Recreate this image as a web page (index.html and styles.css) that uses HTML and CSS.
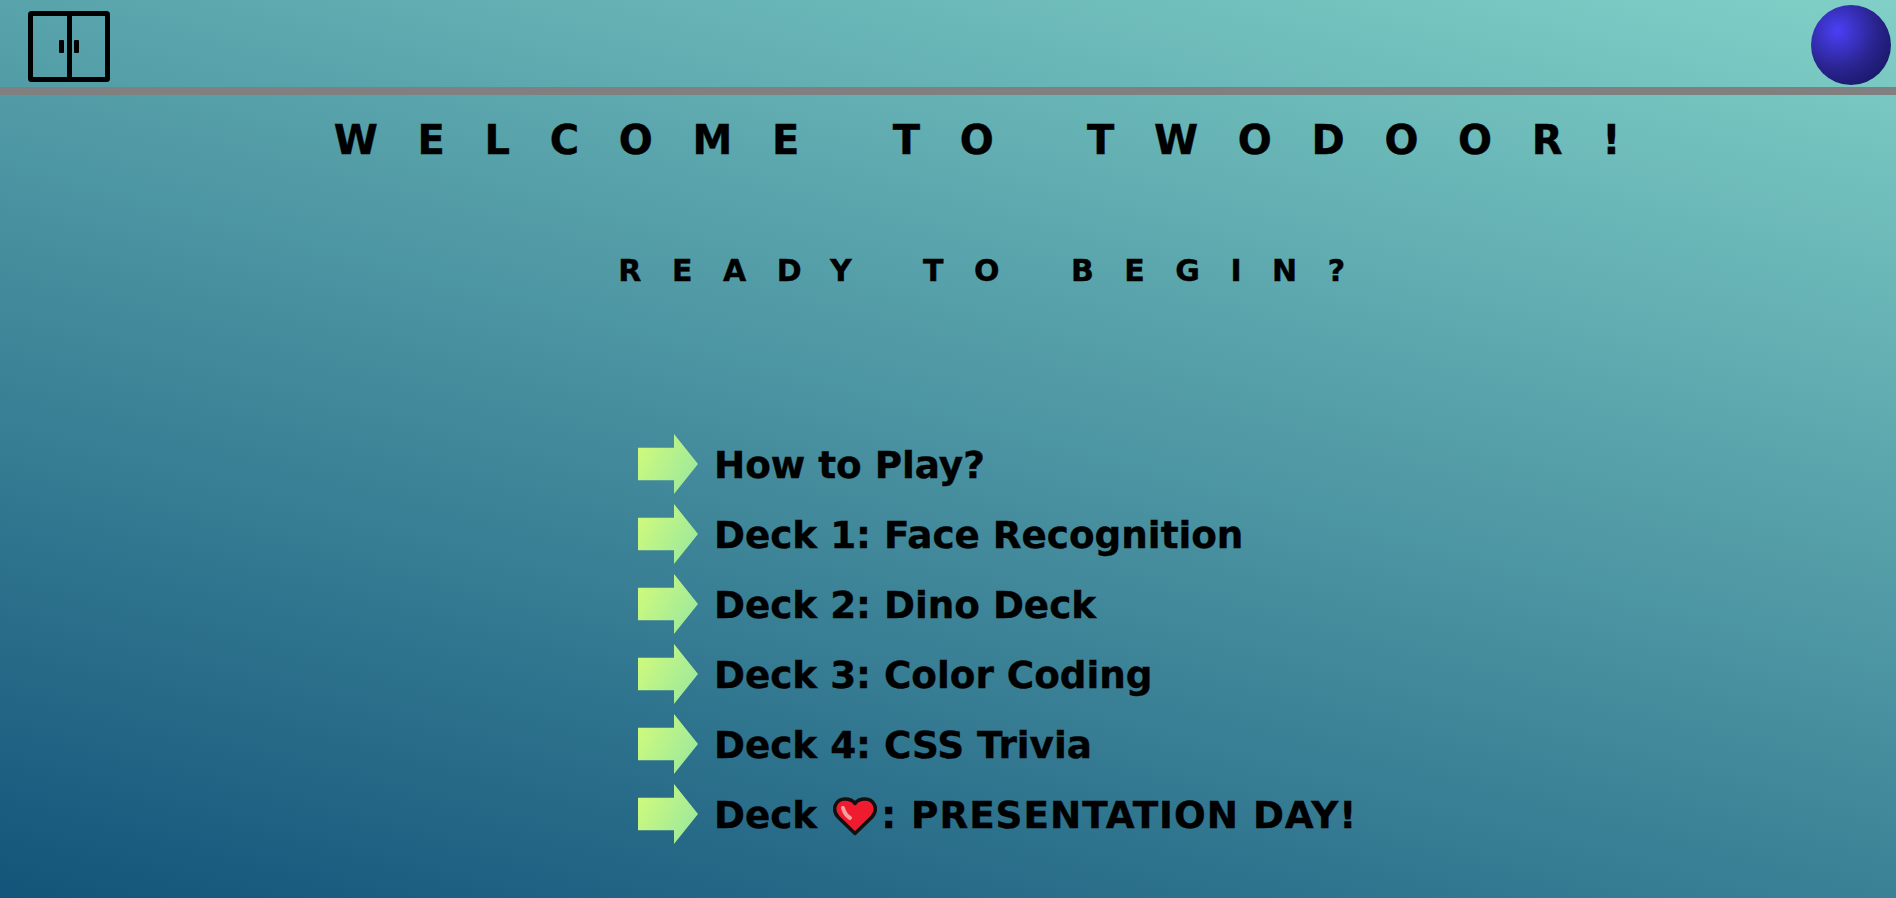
FILE: index.html
```html
<!DOCTYPE html>
<html lang="en">
<head>
    <meta charset="UTF-8">
    <title>TwoDoor</title>
    <link rel="stylesheet" href="styles.css">
</head>
<body>
    <header class="topbar">
        <svg class="logo" viewBox="0 0 82 71" width="82" height="71">
            <rect x="2.5" y="2.5" width="77" height="66" rx="1" fill="none" stroke="#000" stroke-width="5"/>
            <rect x="39" y="2" width="5" height="67" fill="#000"/>
            <rect x="31" y="29" width="5" height="13" rx="1" fill="#000"/>
            <rect x="46" y="29" width="5" height="13" rx="1" fill="#000"/>
        </svg>
        <div class="ball"></div>
    </header>

    <h1 class="welcome">WELCOME TO TWODOOR!</h1>
    <h2 class="ready">READY TO BEGIN?</h2>

    <ul class="decks">
        <li><span class="arrow"></span><span>How to Play?</span></li>
        <li><span class="arrow"></span><span>Deck 1: Face Recognition</span></li>
        <li><span class="arrow"></span><span>Deck 2: Dino Deck</span></li>
        <li><span class="arrow"></span><span>Deck 3: Color Coding</span></li>
        <li><span class="arrow"></span><span>Deck 4: CSS Trivia</span></li>
        <li><span class="arrow"></span><span>Deck</span>
            <svg class="heart" viewBox="0 0 44 40" width="44" height="40">
                <path d="M22 37.5 L5 21 C-2 13 3 3 12 3 C17 3 20 4.5 22 7.5 C24 4.5 27 3 32 3 C41 3 46 13 39 21 Z" fill="#ee1c2e" stroke="#111" stroke-width="3.5" stroke-linejoin="round"/>
                <path d="M10 12 C11 16 14 20 17 22" fill="none" stroke="#f4a0a0" stroke-width="4" stroke-linecap="round"/>
            </svg><span class="shout">: PRESENTATION DAY!</span></li>
    </ul>
</body>
</html>
```
FILE: styles.css
```css
html, body {
    margin: 0;
    height: 100%;
}

body {
    height: 898px;
    overflow: hidden;
    font-family: "DejaVu Sans", Verdana, sans-serif;
    color: #000;
    background: linear-gradient(15deg, #13547a 0%, #80d0c7 100%);
}

.topbar {
    display: flex;
    justify-content: space-between;
    align-items: flex-start;
    height: 82px;
    padding: 5px 5px 0 28px;
    border-bottom: 8px solid #808080;
}

.logo {
    margin-top: 6px;
}

.ball {
    width: 80px;
    height: 80px;
    border-radius: 50%;
    background: radial-gradient(circle at 33% 32%, #4a40f5, #2a2490 50%, #0e1150);
}

.welcome {
    margin: 21px 0 0;
    padding-left: 98px;
    font-size: 40px;
    line-height: 48px;
    text-align: center;
    letter-spacing: 39.7px;
    -webkit-text-stroke: 0.4px #000;
}

.ready {
    margin: 90px 0 0;
    padding-left: 98px;
    font-size: 30px;
    line-height: 34px;
    text-align: center;
    letter-spacing: 30.5px;
    -webkit-text-stroke: 0.4px #000;
}

.decks {
    list-style: none;
    margin: 142px 0 0 638px;
    padding: 0;
    font-size: 37.3px;
    font-weight: bold;
    -webkit-text-stroke: 0.4px #000;
}

.decks li {
    display: flex;
    align-items: center;
    height: 70px;
}

.arrow {
    width: 60px;
    height: 60px;
    margin: -2px 16px 0 0;
    background: linear-gradient(120deg, #d4fc79, #96e6a1);
    clip-path: polygon(0 23%, 60% 23%, 60% 0, 100% 50%, 60% 100%, 60% 77%, 0 77%);
}

.heart {
    margin: 2px 4px 0 16px;
}

.shout {
    letter-spacing: 1px;
}
```
